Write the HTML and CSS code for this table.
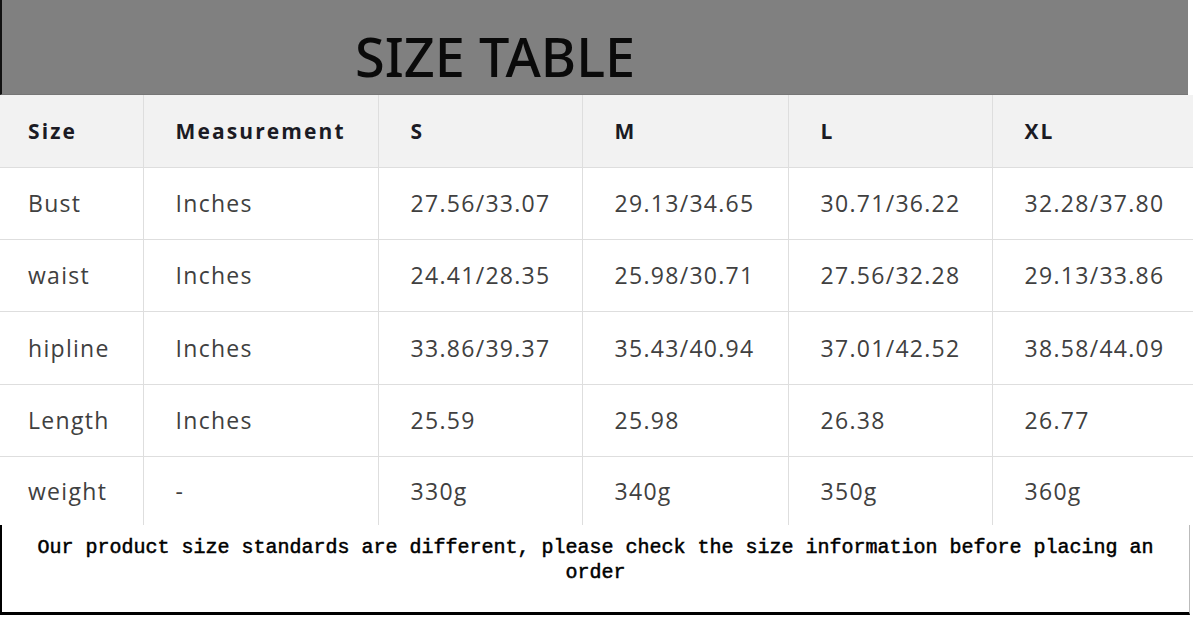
FILE: index.html
```html
<!DOCTYPE html>
<html>
<head>
<meta charset="utf-8">
<link rel="stylesheet" href="styles.css">
</head>
<body>
<div class="page">
  <div class="banner"><h1 class="title">SIZE TABLE</h1></div>
  <table class="size-table">
    <colgroup>
      <col class="c1"><col class="c2"><col class="c3"><col class="c4"><col class="c5"><col class="c6">
    </colgroup>
    <thead>
      <tr><th class="first">Size</th><th>Measurement</th><th>S</th><th>M</th><th>L</th><th>XL</th></tr>
    </thead>
    <tbody>
      <tr><td class="first">Bust</td><td>Inches</td><td>27.56/33.07</td><td>29.13/34.65</td><td>30.71/36.22</td><td>32.28/37.80</td></tr>
      <tr><td class="first">waist</td><td>Inches</td><td>24.41/28.35</td><td>25.98/30.71</td><td>27.56/32.28</td><td>29.13/33.86</td></tr>
      <tr class="tall"><td class="first">hipline</td><td>Inches</td><td>33.86/39.37</td><td>35.43/40.94</td><td>37.01/42.52</td><td>38.58/44.09</td></tr>
      <tr><td class="first">Length</td><td>Inches</td><td>25.59</td><td>25.98</td><td>26.38</td><td>26.77</td></tr>
      <tr class="last"><td class="first">weight</td><td>-</td><td>330g</td><td>340g</td><td>350g</td><td>360g</td></tr>
    </tbody>
  </table>
  <div class="note">
    <p>Our product size standards are different, please check the size information before placing an order</p>
  </div>
</div>
</body>
</html>
```
FILE: styles.css
```css
html, body {
  margin: 0;
  padding: 0;
  background: #ffffff;
}
.page {
  width: 1193px;
  height: 617px;
  overflow: hidden;
}
.banner {
  height: 95px;
  width: 1188px;
  box-sizing: border-box;
  background: #808080;
  border-left: 2px solid #111;
  border-bottom: 1px solid #767676;
}
.title {
  margin: 0;
  padding: 26px 0 0 353px;
  font-family: "Noto Sans", sans-serif;
  font-weight: 500;
  font-size: 54px;
  line-height: 60px;
  letter-spacing: 0;
  color: #0a0a0a;
}
.size-table {
  border-collapse: collapse;
  table-layout: fixed;
  width: 1193px;
  font-family: "Open Sans", sans-serif;
}
.c1 { width: 143px; }
.c2 { width: 235px; }
.c3 { width: 204px; }
.c4 { width: 206px; }
.c5 { width: 204px; }
.c6 { width: 201px; }
.size-table th,
.size-table td {
  text-align: left;
  vertical-align: middle;
  padding: 0 0 0 32px;
  border-left: 1px solid #dedede;
  border-bottom: 1px solid #dedede;
  white-space: nowrap;
}
.size-table th.first,
.size-table td.first {
  padding-left: 28px;
  border-left: none;
}
.size-table thead tr {
  height: 72px;
  background: #f2f2f2;
}
.size-table th {
  font-weight: 700;
  font-size: 21px;
  letter-spacing: 2.1px;
  color: #1b1b24;
}
.size-table tbody tr {
  height: 72px;
}
.size-table tbody tr.tall {
  height: 73px;
}
.size-table tbody tr.last {
  height: 69px;
}
.size-table tbody tr.last td {
  border-bottom: none;
}
.size-table td {
  font-size: 23px;
  letter-spacing: 1.3px;
  color: #404040;
}
.note {
  height: 90px;
  width: 1190px;
  box-sizing: border-box;
  border-left: 2px solid #000;
  border-bottom: 3px solid #000;
  border-right: 1px solid #bbb;
  padding: 10px 30px 0 30px;
}
.note p {
  margin: 0;
  text-align: center;
  font-family: "Liberation Mono", monospace;
  font-weight: 400;
  font-size: 20px;
  line-height: 25px;
  color: #000;
  -webkit-text-stroke: 0.5px #000;
}
```
